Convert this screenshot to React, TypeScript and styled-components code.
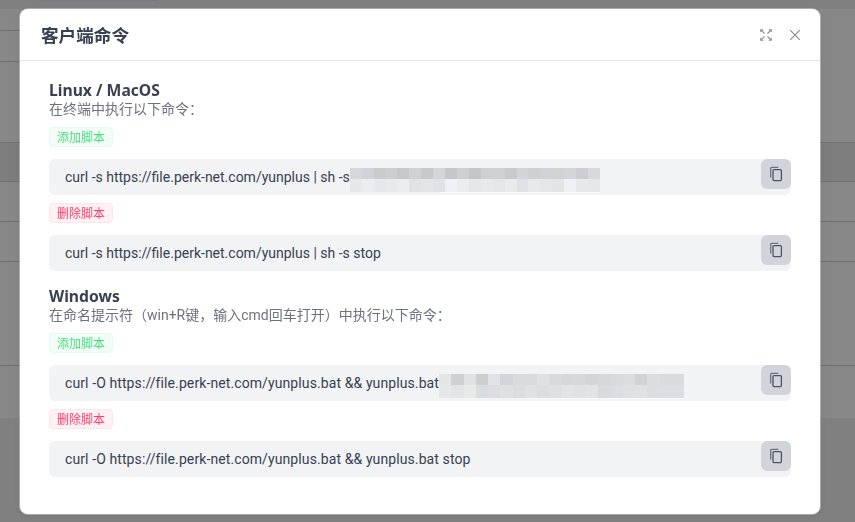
import styled, { createGlobalStyle } from 'styled-components';

const GlobalStyle = createGlobalStyle`
  html, body {
    margin: 0;
    padding: 0;
    height: 100%;
    overflow: hidden;
  }
  body {
    font-family: Roboto, "Noto Sans CJK SC", sans-serif;
    background: #f1f2f4;
  }
`;

type Tone = 'add' | 'remove';

const MOSAIC_LINUX = [
  ['#d6d7d8', '#cfd2d6', '#cacbcd', '#cdcecf', '#c6c8ca', '#d0d1d2', '#c8c9cb', '#d4d5d6', '#c6c7ca', '#cdcfd2', '#c5c6c9', '#cfd0d2', '#d0d1d3', '#c9cacc', '#d2d4d8', '#cfd0d2', '#d1d3d6', '#d2d2d3', '#d3d5d6', '#cbced3', '#d8d9da'],
  ['#e6e7e8', '#ebecee', '#e6e7ea', '#e8e9eb', '#ecedf0', '#e1e2e4', '#e4e5e7', '#e1e2e5', '#eff0f3', '#ebecee', '#e6e7e9', '#e8e9eb', '#e5e6e8', '#e9eaec', '#e0e1e5', '#e8e9eb', '#e5e6e8', '#e3e4e6', '#eff0f3', '#e7e8ea', '#e6e7e9'],
];

const MOSAIC_WINDOWS = [
  ['#e4e5e6', '#cfd0d2', '#e0e1e2', '#cdcece', '#e0e4e7', '#d4d5d8', '#d9dadc', '#dadbdd', '#dfe0e2', '#d9dadd', '#d6d7d9', '#d7d8da', '#d4d5d7', '#d6d7d9', '#d9dadc', '#dcdde0', '#d1d2d4', '#dcdde0', '#dadbdd', '#dadbdd'],
  ['#e6e7e8', '#e3e4e5', '#e7e8e8', '#d8dde0', '#dcdde0', '#dfe0e2', '#dadce0', '#e0e1e3', '#dcdde0', '#dfe0e2', '#e3e4e6', '#e0e1e3', '#e2e3e5', '#d9dadc', '#dcdde0', '#dfe0e2', '#e0e1e3', '#dcdde0', '#dddee1', '#dddee1'],
];

const App = () => (
  <>
    <GlobalStyle />
    <PageBehind>
      <TopStrip>
        <ActiveTab />
      </TopStrip>
      <Row $height={22} $lineWidth="50%" />
      <Row $height={31} $lineWidth="50%" />
      <Row $height={81} />
      <Row $height={39} $shaded />
      <Row $height={40} />
      <Row $height={40} />
      <Row $height={104} />
      <Row $height={52} $noLine />
    </PageBehind>

    <Overlay>
      <Modal>
        <ModalHeader>
          <ModalTitle>客户端命令</ModalTitle>
          <HeaderActions>
            <HeaderButton aria-label="全屏">
              <ExpandIcon />
            </HeaderButton>
            <HeaderButton aria-label="关闭">
              <CloseIcon />
            </HeaderButton>
          </HeaderActions>
        </ModalHeader>

        <ModalBody>
          <Section>
            <SectionTitle>Linux / MacOS</SectionTitle>
            <SectionHint>在终端中执行以下命令：</SectionHint>
            <CommandGroup>
              <Command
                tone="add"
                label="添加脚本"
                text="curl -s https://file.perk-net.com/yunplus | sh -s"
                mosaic={MOSAIC_LINUX}
                mosaicWidth={250}
              />
              <Command
                tone="remove"
                label="删除脚本"
                text="curl -s https://file.perk-net.com/yunplus | sh -s stop"
              />
            </CommandGroup>
          </Section>

          <Section>
            <SectionTitle>Windows</SectionTitle>
            <SectionHint>在命名提示符（win+R键，输入cmd回车打开）中执行以下命令：</SectionHint>
            <CommandGroup>
              <Command
                tone="add"
                label="添加脚本"
                text="curl -O https://file.perk-net.com/yunplus.bat && yunplus.bat"
                mosaic={MOSAIC_WINDOWS}
                mosaicWidth={245}
                wide
              />
              <Command
                tone="remove"
                label="删除脚本"
                text="curl -O https://file.perk-net.com/yunplus.bat && yunplus.bat stop"
                wide
              />
            </CommandGroup>
          </Section>
        </ModalBody>
      </Modal>
    </Overlay>
  </>
);

type CommandProps = {
  tone: Tone;
  label: string;
  text: string;
  mosaic?: string[][];
  mosaicWidth?: number;
  wide?: boolean;
};

const Command = ({ tone, label, text, mosaic, mosaicWidth, wide }: CommandProps) => (
  <CommandItem>
    <Tag $tone={tone}>{label}</Tag>
    <CodeBlock>
      <CodeText $wide={wide}>{text}</CodeText>
      {mosaic && (
        <Mosaic $width={mosaicWidth}>
          {mosaic.map((cells, rowIndex) => (
            <MosaicRow key={rowIndex} $tall={rowIndex === 1}>
              {cells.map((color, cellIndex) => (
                <MosaicCell key={cellIndex} style={{ background: color }} />
              ))}
            </MosaicRow>
          ))}
        </Mosaic>
      )}
      <CopyButton aria-label="复制">
        <CopyIcon />
      </CopyButton>
    </CodeBlock>
  </CommandItem>
);

const ExpandIcon = () => (
  <svg width="14" height="14" viewBox="0 0 14 14" fill="none">
    <path d="M1.2 1.2h3.4L1.2 4.6z" fill="#8b8b8b" />
    <path d="M12.8 1.2H9.4l3.4 3.4z" fill="#8b8b8b" />
    <path d="M1.2 12.8h3.4L1.2 9.4z" fill="#8b8b8b" />
    <path d="M12.8 12.8H9.4l3.4-3.4z" fill="#8b8b8b" />
    <path d="M2.5 2.5 5.5 5.5M11.5 2.5 8.5 5.5M2.5 11.5 5.5 8.5M11.5 11.5 8.5 8.5" stroke="#8b8b8b" strokeWidth="1.1" />
  </svg>
);

const CloseIcon = () => (
  <svg width="12" height="12" viewBox="0 0 12 12" fill="none">
    <path d="M1.2 1.2 10.8 10.8M10.8 1.2 1.2 10.8" stroke="#8b8b8b" strokeWidth="1.2" />
  </svg>
);

const CopyIcon = () => (
  <svg width="16" height="16" viewBox="0 0 16 16" fill="none">
    <rect x="5" y="3.6" width="8.4" height="11" rx="1" stroke="#4b5563" strokeWidth="1.3" />
    <path d="M2.7 11.6V2.4c0-.6.4-1 1-1h6.6" stroke="#6b7280" strokeWidth="1.3" />
  </svg>
);

const PageBehind = styled.div`
  display: flex;
  flex-direction: column;
  width: 100%;
`;

const TopStrip = styled.div`
  height: 9px;
  background: #f1f2f4;
`;

const ActiveTab = styled.div`
  width: 118px;
  height: 1px;
  margin-left: 40px;
  background: #d9e6ff;
`;

const Row = styled.div<{ $height: number; $shaded?: boolean; $noLine?: boolean; $lineWidth?: string }>`
  height: ${(p) => p.$height}px;
  background: ${(p) => (p.$shaded ? '#ececec' : '#ffffff')};
  display: flex;
  flex-direction: column;
  justify-content: flex-end;

  &::after {
    content: '';
    display: ${(p) => (p.$noLine ? 'none' : 'block')};
    height: 1px;
    width: ${(p) => p.$lineWidth ?? '100%'};
    background: #d4d4d4;
  }
`;

const Overlay = styled.div`
  position: fixed;
  inset: 0;
  background: rgba(0, 0, 0, 0.47);
  padding: 9px 35px 8px 20px;
  box-sizing: border-box;
`;

const Modal = styled.div`
  width: 800px;
  height: 505px;
  background: #fff;
  border-radius: 8px;
  box-shadow: 0 0 0 1px rgba(255, 255, 255, 0.35), 0 2px 8px rgba(0, 0, 0, 0.08);
  display: flex;
  flex-direction: column;
`;

const ModalHeader = styled.div`
  height: 52px;
  box-sizing: border-box;
  border-bottom: 1px solid #e5e7eb;
  padding: 0 19px 0 21px;
  display: flex;
  align-items: center;
  justify-content: space-between;
  flex-shrink: 0;
`;

const ModalTitle = styled.h2`
  margin: 0;
  font-size: 17.6px;
  font-weight: 700;
  color: #374151;
`;

const HeaderActions = styled.div`
  display: flex;
  align-items: center;
  gap: 16px;
`;

const HeaderButton = styled.button`
  border: 0;
  padding: 0;
  background: none;
  display: flex;
  cursor: pointer;
`;

const ModalBody = styled.div`
  padding: 19px 29px 0;
  display: flex;
  flex-direction: column;
  gap: 15px;
`;

const Section = styled.section`
  display: flex;
  flex-direction: column;
`;

const SectionTitle = styled.h3`
  margin: 0;
  font-family: "Noto Sans", sans-serif;
  font-size: 15.7px;
  line-height: 20px;
  font-weight: 700;
  color: #374151;
`;

const SectionHint = styled.p`
  margin: -1px 0 8px;
  font-size: 14px;
  line-height: 20px;
  color: #6b7280;
`;

const CommandGroup = styled.div`
  display: flex;
  flex-direction: column;
  gap: 8px;
`;

const CommandItem = styled.div`
  display: flex;
  flex-direction: column;
  align-items: flex-start;
  gap: 12px;
`;

const Tag = styled.span<{ $tone: Tone }>`
  box-sizing: border-box;
  width: 64px;
  height: 20px;
  line-height: 20px;
  text-align: center;
  font-size: 12px;
  border-radius: 4px;
  border: 1px solid ${(p) => (p.$tone === 'add' ? '#e6faee' : '#ffe4ea')};
  background: ${(p) => (p.$tone === 'add' ? '#f2fdf6' : '#fff1f4')};
  color: ${(p) => (p.$tone === 'add' ? '#4ade80' : '#fb3f6c')};
`;

const CodeBlock = styled.div`
  position: relative;
  align-self: stretch;
  height: 36px;
  box-sizing: border-box;
  padding-left: 16px;
  background: #f2f3f5;
  border-radius: 6px;
  display: flex;
  align-items: center;
  font-size: 14px;
  color: #374151;
`;

const CodeText = styled.code<{ $wide?: boolean }>`
  font-family: inherit;
  white-space: pre;
  letter-spacing: ${(p) => (p.$wide ? '0.1px' : 'normal')};
`;

const Mosaic = styled.div<{ $width?: number }>`
  display: flex;
  flex-direction: column;
  width: ${(p) => p.$width}px;
  margin-top: 6px;

  &::after {
    content: '';
    height: 1px;
    margin-left: 36%;
    background: #fafafb;
  }
`;

const MosaicRow = styled.div<{ $tall?: boolean }>`
  display: flex;
  height: ${(p) => (p.$tall ? 13 : 11)}px;
`;

const MosaicCell = styled.span`
  flex: 1;
`;

const CopyButton = styled.button`
  position: absolute;
  top: 0;
  right: 0;
  width: 30px;
  height: 30px;
  padding: 0;
  border: 0;
  border-radius: 6px;
  background: #d1d5db;
  display: flex;
  align-items: center;
  justify-content: center;
  cursor: pointer;
`;

export default App;
